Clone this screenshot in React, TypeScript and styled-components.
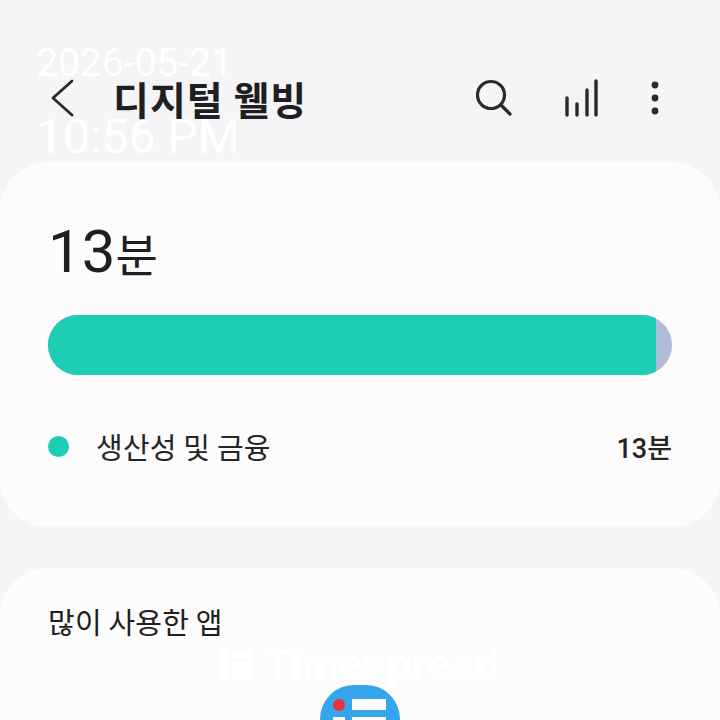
import styled, { createGlobalStyle } from 'styled-components';

const GlobalStyle = createGlobalStyle`
  html, body {
    margin: 0;
    padding: 0;
    background: #f5f5f8;
  }
  body {
    font-family: Roboto, "Noto Sans CJK KR", sans-serif;
  }
`;

const Page = styled.div`
  position: relative;
  width: 720px;
  height: 720px;
  overflow: hidden;
  background: #f5f5f8;
  display: flex;
  flex-direction: column;
`;

const Toolbar = styled.header`
  height: 72px;
  margin-top: 62px;
  margin-bottom: 28px;
  padding-left: 48px;
  display: flex;
  align-items: center;
  flex-shrink: 0;
`;

const BackButton = styled.div`
  width: 66px;
  height: 44px;
  display: flex;
  align-items: center;
`;

const Title = styled.h1`
  margin: 0;
  margin-left: -1px;
  flex: 1;
  font-size: 39px;
  font-weight: 700;
  letter-spacing: 1px;
  color: #1f1f21;
  font-family: "Noto Sans CJK KR", sans-serif;
`;

const ToolIcons = styled.div`
  display: flex;
  align-items: center;
  padding-right: 59px;
  gap: 50px;
`;

const Card = styled.section`
  background: #fcfcfc;
  border-radius: 48px;
  flex-shrink: 0;
`;

const SummaryCard = styled(Card)`
  height: 365px;
  padding: 58px 48px 0;
  box-sizing: border-box;
  margin-bottom: 41px;
`;

const Total = styled.div`
  display: flex;
  align-items: baseline;
  height: 64px;
  line-height: 64px;
  color: #1f1f21;
`;

const TotalValue = styled.span`
  font-size: 60px;
  font-weight: 400;
`;

const TotalUnit = styled.span`
  font-size: 46px;
  font-weight: 400;
  font-family: "Noto Sans CJK KR", sans-serif;
`;

const UsageBar = styled.div`
  margin-top: 31px;
  height: 60px;
  border-radius: 30px;
  background: #aebcd8;
  overflow: hidden;
`;

const UsageFill = styled.div`
  height: 100%;
  background: #1dcdb4;
`;

const LegendRow = styled.div`
  margin-top: 50px;
  display: flex;
  align-items: center;
  color: #252527;
`;

const LegendDot = styled.span`
  width: 21px;
  height: 21px;
  border-radius: 50%;
  background: #1dcdb4;
  margin-right: 27px;
`;

const LegendLabel = styled.span`
  flex: 1;
  font-size: 29px;
  letter-spacing: 0.2px;
  font-weight: 400;
  font-family: "Noto Sans CJK KR", sans-serif;
`;

const LegendValue = styled.span`
  font-size: 27px;
  font-weight: 500;
  font-family: Roboto, "Noto Sans CJK KR", sans-serif;
`;

const AppsCard = styled(Card)`
  flex: 1;
  padding: 35px 48px 0;
  display: flex;
  flex-direction: column;
`;

const AppsHeading = styled.h2`
  margin: 0;
  font-size: 29px;
  letter-spacing: 0.2px;
  line-height: 36px;
  font-weight: 400;
  color: #1f1f21;
  font-family: "Noto Sans CJK KR", sans-serif;
`;

const AppIconWrap = styled.div`
  margin-top: 46px;
  display: flex;
  justify-content: center;
`;

const Stamp = styled.div<{ $size: number; $top: number }>`
  position: absolute;
  left: 36px;
  top: ${({ $top }) => $top}px;
  font-family: Roboto, sans-serif;
  font-weight: 400;
  font-size: ${({ $size }) => $size}px;
  line-height: 1;
  color: #ffffff;
  white-space: nowrap;
`;

const Watermark = styled.div`
  position: absolute;
  left: 220px;
  top: 646px;
  display: flex;
  align-items: center;
  gap: 13px;
  font-family: "Liberation Sans", sans-serif;
  font-size: 42px;
  font-weight: 700;
  line-height: 38px;
  color: #ffffff;
`;

const App = () => {
  const usagePercent = (608 / 624) * 100;

  return (
    <Page>
      <GlobalStyle />
      <Toolbar>
        <BackButton>
          <svg width="28" height="40" viewBox="0 0 28 40" fill="none">
            <path d="M24 3 L5 20 L24 37" stroke="#2a2a2c" strokeWidth="2.8" strokeLinecap="round" strokeLinejoin="round" />
          </svg>
        </BackButton>
        <Title>디지털 웰빙</Title>
        <ToolIcons>
          <svg width="38" height="38" viewBox="0 0 38 38" fill="none">
            <circle cx="16" cy="16" r="13.5" stroke="#2a2a2c" strokeWidth="3.2" />
            <path d="M26 26 L35 35" stroke="#2a2a2c" strokeWidth="3.2" strokeLinecap="round" />
          </svg>
          <svg width="36" height="38" viewBox="0 0 36 38" fill="none">
            <g stroke="#2a2a2c" strokeWidth="3.4" strokeLinecap="round">
              <path d="M4 19 V36" />
              <path d="M14 25 V36" />
              <path d="M24 11 V36" />
              <path d="M33 2 V36" />
            </g>
          </svg>
          <svg width="12" height="36" viewBox="0 0 12 36" fill="#2a2a2c">
            <circle cx="6" cy="5" r="3.4" />
            <circle cx="6" cy="18" r="3.4" />
            <circle cx="6" cy="31" r="3.4" />
          </svg>
        </ToolIcons>
      </Toolbar>

      <SummaryCard>
        <Total>
          <TotalValue>13</TotalValue>
          <TotalUnit>분</TotalUnit>
        </Total>
        <UsageBar>
          <UsageFill style={{ width: `${usagePercent}%` }} />
        </UsageBar>
        <LegendRow>
          <LegendDot />
          <LegendLabel>생산성 및 금융</LegendLabel>
          <LegendValue>13분</LegendValue>
        </LegendRow>
      </SummaryCard>

      <AppsCard>
        <AppsHeading>많이 사용한 앱</AppsHeading>
        <AppIconWrap>
          <svg width="80" height="80" viewBox="0 0 80 80">
            <rect width="80" height="80" rx="34" fill="#35a5ee" />
            <rect x="32" y="14" width="34" height="11" fill="#fcfcfc" />
            <circle cx="19" cy="20" r="6" fill="#e5343a" />
            <rect x="13" y="32" width="12" height="12" fill="#fcfcfc" />
            <rect x="32" y="32" width="34" height="12" fill="#fcfcfc" />
          </svg>
        </AppIconWrap>
      </AppsCard>

      <Stamp $size={39} $top={44}>2026-05-21</Stamp>
      <Stamp $size={48} $top={113}>10:56 PM</Stamp>
      <Watermark>
        <svg width="32" height="32" viewBox="0 0 32 32" fill="#ffffff">
          <rect x="0" y="2" width="8" height="7" />
          <rect x="12" y="2" width="20" height="7" />
          <rect x="0" y="12" width="8" height="20" />
          <rect x="12" y="12" width="20" height="20" />
        </svg>
        <span>Timespread</span>
      </Watermark>
    </Page>
  );
};

export default App;
